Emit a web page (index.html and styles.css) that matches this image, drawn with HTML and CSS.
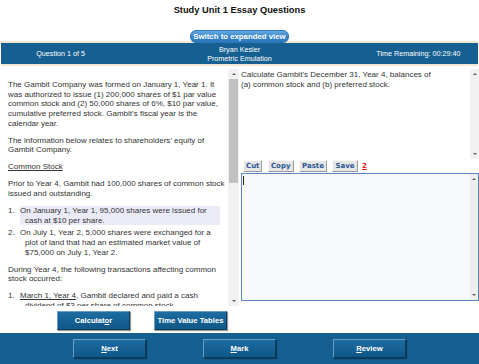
FILE: index.html
```html
<!DOCTYPE html>
<html lang="en">
<head>
    <meta charset="UTF-8">
    <title>Study Unit 1 Essay Questions</title>
    <link rel="stylesheet" href="styles.css">
</head>
<body>

<h1 class="title">Study Unit 1 Essay Questions</h1>
<div class="switch-row"><button class="switch">Switch to expanded view</button></div>

<div class="topbar">
    <div class="tb-side">Question 1 of 5</div>
    <div class="tb-mid">Bryan Kesler<br>Prometric Emulation</div>
    <div class="tb-side">Time Remaining: 00:29:40</div>
</div>

<div class="main">
    <div class="left">
        <div class="scenario">
            <p>The Gambit Company was formed on January 1, Year 1. It was authorized to issue (1) 200,000 shares of $1 par value common stock and (2) 50,000 shares of 6%, $10 par value, cumulative preferred stock. Gambit’s fiscal year is the calendar year.</p>
            <p>The information below relates to shareholders’ equity of Gambit Company.</p>
            <p><u>Common Stock</u></p>
            <p>Prior to Year 4, Gambit had 100,000 shares of common stock issued and outstanding.</p>
            <div class="list">
                <div class="item"><span class="num">1.</span><div class="body hl">On January 1, Year 1, 95,000 shares were issued for cash at $10 per share.</div></div>
                <div class="item"><span class="num">2.</span><div class="body">On July 1, Year 2, 5,000 shares were exchanged for a plot of land that had an estimated market value of $75,000 on July 1, Year 2.</div></div>
            </div>
            <p>During Year 4, the following transactions affecting common stock occurred:</p>
            <div class="list">
                <div class="item"><span class="num">1.</span><div class="body"><u>March 1, Year 4</u>, Gambit declared and paid a cash dividend of $3 per share of common stock.</div></div>
            </div>
        </div>
        <div class="vbar wide">
            <span class="btn"><span class="up"></span></span>
            <span class="track"><span class="thumb"></span></span>
            <span class="btn"><span class="down"></span></span>
        </div>
    </div>

    <div class="right">
        <div class="question">
            <div class="q-text">Calculate Gambit’s December 31, Year 4, balances of<br>(a) common stock and (b) preferred stock.</div>
            <div class="vbar">
                <span class="btn"><span class="up"></span></span>
                <span class="track"></span>
                <span class="btn"><span class="down"></span></span>
            </div>
        </div>
        <div class="tools">
            <button class="tool">Cut</button>
            <button class="tool">Copy</button>
            <button class="tool">Paste</button>
            <button class="tool">Save</button>
            <span class="help">2</span>
        </div>
        <div class="answer">
            <div class="a-text"><span class="caret"></span></div>
            <div class="vbar thin">
                <span class="btn"><span class="up"></span></span>
                <span class="track"></span>
                <span class="btn"><span class="down"></span></span>
            </div>
        </div>
    </div>
</div>

<div class="tool-row">
    <button class="dark-btn">Calculat<u>o</u>r</button>
    <button class="dark-btn">Time Value Tables</button>
</div>

<div class="navbar">
    <button class="dark-btn nav"><u>N</u>ext</button>
    <button class="dark-btn nav"><u>M</u>ark</button>
    <button class="dark-btn nav"><u>R</u>eview</button>
</div>

</body>
</html>
```

FILE: styles.css
```css
body {
    margin: 0;
    width: 479px;
    height: 364px;
    overflow: hidden;
    background: #fff;
    color: #333;
    font-family: "Liberation Sans", Arial, sans-serif;
}
button {
    font-family: inherit;
    cursor: pointer;
}
.title {
    margin: 0;
    padding: 4px 0 9px;
    font-size: 9.3px;
    line-height: 12px;
    text-align: center;
    color: #111;
}
.switch-row {
    height: 16px;
    text-align: center;
}
.switch {
    height: 13px;
    margin: 0;
    padding: 0 2px;
    font-size: 7.8px;
    font-weight: bold;
    line-height: 11px;
    color: #fff;
    background: linear-gradient(#66a9e0, #3483c8 55%, #2c78bd);
    border: 1px solid #2d76b8;
    border-radius: 6px;
}

/* top info bar */
.topbar {
    display: flex;
    align-items: center;
    height: 21px;
    margin: 0 1px;
    background: #155f91;
    border-top: 2px solid #f0e7d4;
    border-bottom: 2px solid #f0e7d4;
    color: #fff;
    font-size: 7.2px;
    line-height: 9px;
}
.tb-side {
    width: 25%;
    text-align: center;
}
.tb-mid {
    width: 50%;
    text-align: center;
}

/* panes */
.main {
    display: flex;
    height: 238px;
    margin-top: 3px;
}
.left {
    display: flex;
    width: 239px;
    height: 237px;
}
.scenario {
    width: 218px;
    padding: 11.2px 2px 0 8px;
    overflow: hidden;
    font-size: 8px;
    line-height: 9.6px;
}
.scenario p {
    margin: 0 0 7.5px;
}
.list {
    margin-bottom: 7.5px;
}
.item {
    display: flex;
    margin-bottom: 3px;
}
.num {
    width: 12px;
    flex: none;
}
.body {
    width: 195px;
    padding-left: 5px;
    text-indent: -5px;
}
.hl {
    background: #ebebf8;
}

/* fake scrollbars */
.vbar {
    display: flex;
    flex-direction: column;
    width: 9px;
    flex: none;
    background: #f1f1f1;
}
.vbar.wide {
    width: 11px;
}
.vbar.thin {
    width: 8px;
    background: #eeeeef;
}
.vbar .btn {
    display: flex;
    align-items: center;
    justify-content: center;
    height: 10px;
}
.vbar .track {
    flex: 1;
    padding: 0 1px;
}
.thumb {
    display: block;
    height: 104px;
    background: #c1c1c1;
}
.up, .down {
    width: 0;
    height: 0;
    border-left: 2px solid transparent;
    border-right: 2px solid transparent;
}
.up {
    border-bottom: 2px solid #606060;
}
.down {
    border-top: 2px solid #606060;
}

.right {
    display: flex;
    flex-direction: column;
    width: 240px;
}
.question {
    display: flex;
    height: 90px;
}
.q-text {
    flex: 1;
    padding: 1px 0 0 2px;
    font-size: 8px;
    line-height: 9.6px;
}
.tools {
    display: flex;
    align-items: center;
    gap: 5.5px;
    height: 14px;
    padding-left: 4px;
}
.tool {
    height: 12px;
    margin: 0;
    padding: 0 2px;
    font-family: "DejaVu Sans", Verdana, sans-serif;
    font-size: 7px;
    font-weight: bold;
    line-height: 10px;
    color: #2b5592;
    background: #e6e6e6;
    border: 1px solid;
    border-color: #fafafa #9c9c9c #9c9c9c #fafafa;
}
.help {
    margin-left: -1px;
    font-family: "DejaVu Sans", Verdana, sans-serif;
    font-size: 7px;
    font-weight: bold;
    color: #e02020;
    text-decoration: underline;
}
.answer {
    display: flex;
    height: 126px;
    margin-left: 2px;
    background: #f6f8fc;
    border: 1px solid #5a86c8;
}
.a-text {
    flex: 1;
    padding: 2px 0 0 1px;
}
.caret {
    display: block;
    width: 1px;
    height: 9px;
    background: #222;
}

/* buttons along the bottom */
.tool-row {
    display: flex;
    gap: 24px;
    height: 19px;
    padding: 4px 0 3px 57px;
}
.dark-btn {
    width: 73px;
    height: 19px;
    margin: 0;
    padding: 0;
    font-size: 7.7px;
    font-weight: bold;
    color: #fff;
    background: linear-gradient(#1d6ca2, #0f5787);
    border: 1px solid;
    border-color: #6a9cc4 #0a3c5e #0a3c5e #6a9cc4;
    box-shadow: 1px 1px 1px rgba(0, 0, 0, 0.4);
}
.navbar {
    display: flex;
    justify-content: center;
    gap: 57px;
    height: 25px;
    padding-top: 6px;
    background: #155f91;
}
```
